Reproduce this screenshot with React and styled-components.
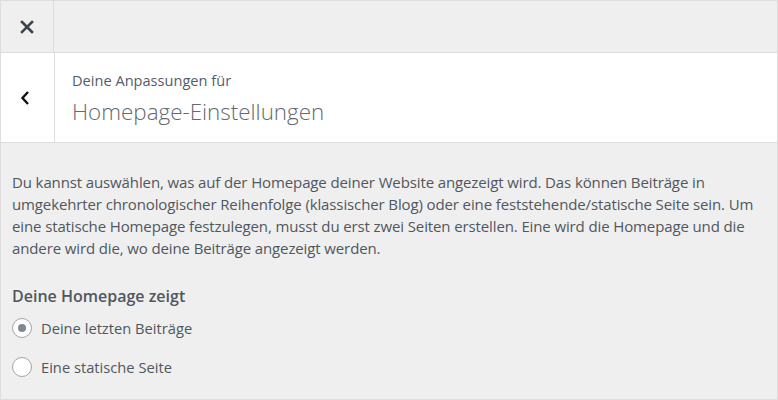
import React from "react";
import styled, { createGlobalStyle } from "styled-components";

const GlobalStyle = createGlobalStyle`
  html, body {
    margin: 0;
    padding: 0;
    background: #efefef;
  }
  * {
    box-sizing: border-box;
  }
`;

const Panel = styled.div`
  width: 778px;
  height: 400px;
  overflow: hidden;
  background: #efefef;
  border: 1px solid #dddddd;
  font-family: "Open Sans", "Noto Sans", sans-serif;
  color: #50575e;
`;

const Header = styled.div`
  display: flex;
  height: 52px;
  border-bottom: 1px solid #dddddd;
`;

const IconButton = styled.button`
  width: ${(props) => props.width || "53px"};
  flex-shrink: 0;
  display: flex;
  align-items: center;
  justify-content: center;
  background: transparent;
  border: none;
  border-right: 1px solid #dddddd;
  padding: 0 ${(props) => props.shift || "0"} 0 0;
  color: ${(props) => props.color || "#3c434a"};
  cursor: pointer;
`;

const SectionHead = styled.div`
  display: flex;
  height: 90px;
  background: #ffffff;
  border-bottom: 1px solid #dddddd;
`;

const TitleBlock = styled.div`
  display: flex;
  flex-direction: column;
  padding: 17px 0 0 17px;
`;

const Eyebrow = styled.span`
  font-size: 14.6px;
  line-height: 20px;
  color: #555d66;
`;

const Title = styled.h3`
  margin: 8px 0 0;
  font-size: 22.4px;
  font-weight: 300;
  line-height: 28px;
  color: #646970;
`;

const Body = styled.div`
  padding: 28px 12px 0 11px;
`;

const Description = styled.p`
  margin: 0;
  font-size: 15px;
  letter-spacing: -0.12px;
  line-height: 22px;
  color: #50575e;
`;

const FieldTitle = styled.h4`
  margin: 25px 0 0;
  font-size: 16px;
  font-weight: 600;
  line-height: 24px;
  color: #50575e;
`;

const Options = styled.div`
  display: flex;
  flex-direction: column;
  gap: 17px;
  margin-top: 9px;
`;

const Option = styled.label`
  display: flex;
  align-items: center;
  gap: 9px;
  font-size: 14.7px;
  line-height: 22px;
  color: #50575e;
  cursor: pointer;
`;

const Radio = styled.span`
  width: 20px;
  height: 20px;
  border-radius: 50%;
  border: 1px solid #a0a5aa;
  background: #ffffff;
  display: flex;
  align-items: center;
  justify-content: center;

  &::after {
    content: "";
    width: 8px;
    height: 8px;
    border-radius: 50%;
    background: ${(props) => (props.checked ? "#7e8993" : "transparent")};
  }
`;

const CloseIcon = () => (
  <svg width="14" height="14" viewBox="0 0 14 14">
    <path d="M2 2 L12 12 M12 2 L2 12" stroke="currentColor" strokeWidth="2.6" strokeLinecap="square" />
  </svg>
);

const BackIcon = () => (
  <svg width="10" height="16" viewBox="0 0 10 16">
    <path d="M8 2 L2.5 8 L8 14" fill="none" stroke="currentColor" strokeWidth="2.4" />
  </svg>
);

const options = [
  { label: "Deine letzten Beiträge", checked: true },
  { label: "Eine statische Seite", checked: false },
];

const App = () => {
  return (
    <>
      <GlobalStyle />
      <Panel>
        <Header>
          <IconButton aria-label="Schließen">
            <CloseIcon />
          </IconButton>
        </Header>
        <SectionHead>
          <IconButton width="54px" shift="6px" color="#111" aria-label="Zurück">
            <BackIcon />
          </IconButton>
          <TitleBlock>
            <Eyebrow>Deine Anpassungen für</Eyebrow>
            <Title>Homepage-Einstellungen</Title>
          </TitleBlock>
        </SectionHead>
        <Body>
          <Description>
            Du kannst auswählen, was auf der Homepage deiner Website angezeigt
            wird. Das können Beiträge in umgekehrter chronologischer
            Reihenfolge (klassischer Blog) oder eine feststehende/statische
            Seite sein. Um eine statische Homepage festzulegen, musst du erst
            zwei Seiten erstellen. Eine wird die Homepage und die andere wird
            die, wo deine Beiträge angezeigt werden.
          </Description>
          <FieldTitle>Deine Homepage zeigt</FieldTitle>
          <Options>
            {options.map((opt) => (
              <Option key={opt.label}>
                <Radio checked={opt.checked} />
                {opt.label}
              </Option>
            ))}
          </Options>
        </Body>
      </Panel>
    </>
  );
};

export default App;
